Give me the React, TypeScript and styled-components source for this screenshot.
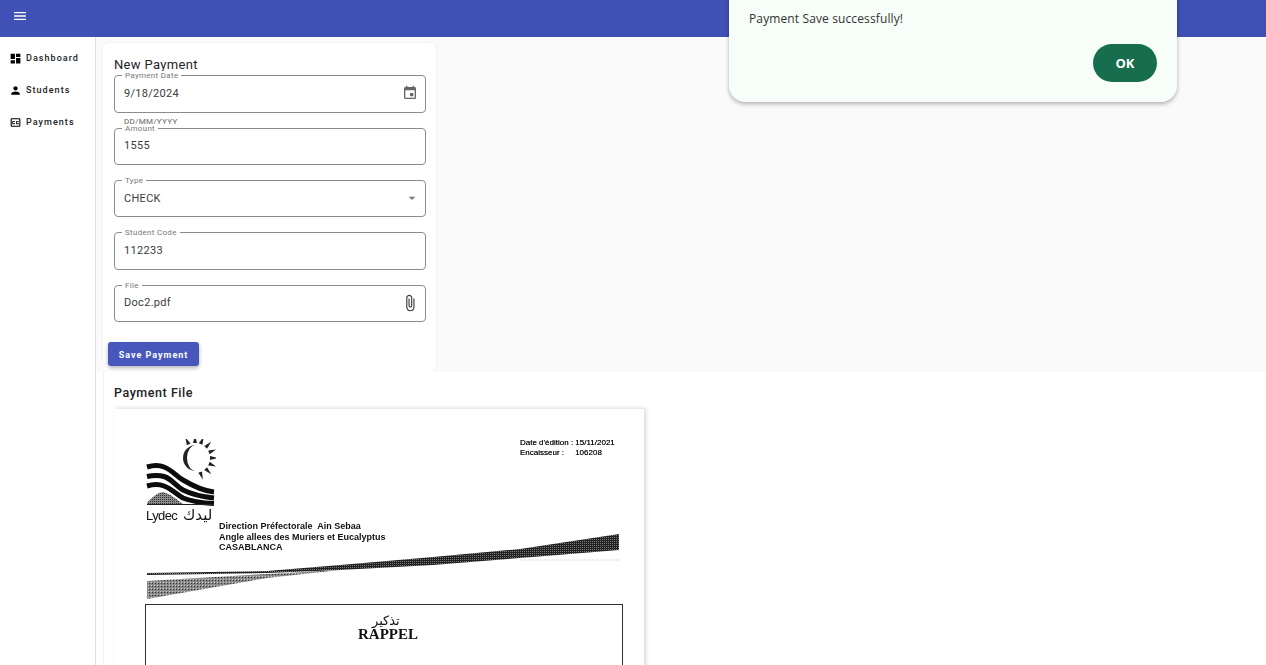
import React from "react";
import styled, { createGlobalStyle } from "styled-components";
import { MdMenu, MdDashboard, MdPerson, MdEvent, MdAttachFile, MdArrowDropDown, MdOutlineClosedCaption } from "react-icons/md";

const Global = createGlobalStyle`
  html, body { margin: 0; padding: 0; background: #fff; }
  body { font-family: Roboto, "Liberation Sans", sans-serif; color: rgba(0,0,0,.87); }
`;

const Page = styled.div`
  width: 1266px; height: 665px; overflow: hidden; position: relative;
  display: flex; flex-direction: column;
`;
const Header = styled.header`
  height: 37px; flex: none; background: #3f51b5; display: flex; align-items: center; padding-left: 12px; color: #fff;
  box-sizing: border-box; svg { display: block; margin-top: -6px; }
`;
const Body = styled.div`flex: 1; display: flex; min-height: 0;`;
const Sidebar = styled.nav`
  width: 95px; flex: none; border-right: 1px solid #e0e0e0; background: #fff; display: flex; flex-direction: column; padding-top: 5px;
`;
const NavItem = styled.div`
  height: 32px; display: flex; align-items: center; gap: 4px; padding-left: 9px;
  font-size: 9px; letter-spacing: 1.05px; font-weight: 500; color: #222;
  svg { display: block; flex: none; color: #000; }
`;
const Main = styled.main`flex: 1; display: flex; flex-direction: column; min-width: 0;`;
const Top = styled.section`height: 335px; flex: none; background: #fafafa; padding: 6px 0 0 7px; box-sizing: border-box;`;
const Card = styled.div`
  width: 333px; height: 329px; box-sizing: border-box; background: #fff; border-radius: 6px;
  box-shadow: 0 0 2px rgba(0,0,0,.08); padding: 14px 10px 0 11px; display: flex; flex-direction: column;
`;
const Title = styled.h2`
  margin: 0 0 2.2px; font-size: 13px; line-height: 16px; font-weight: 400; letter-spacing: .33px; color: #1f2328;
`;
const Fields = styled.div`display: flex; flex-direction: column; gap: 15px;`;
const Field = styled.div`
  position: relative; width: 312px; height: 37.4px; box-sizing: border-box; border: 1px solid #8c8c8c; border-radius: 4px;
  display: flex; align-items: center; justify-content: space-between; padding: 0 7px 1px 9px; font-size: 11px; letter-spacing: .3px; color: #3c3c3c;
  svg { display: block; color: #666; flex: none; }
`;
const FieldLabel = styled.label`
  position: absolute; left: 7px; top: -5px; background: #fff; padding: 0 3px; font-size: 8px; line-height: 9px; letter-spacing: .3px; color: #777;
`;
const Helper = styled.div`
  position: absolute; left: 9px; top: 41px; font-size: 8px; line-height: 10px; letter-spacing: .3px; color: #666;
`;
const SelectArrow = styled(MdArrowDropDown)`
  margin-right: -2px; && { color: #777; }
`;
const ClipIcon = styled(MdAttachFile)`
  margin-right: -1px; && { color: #3a3a3a; }
`;
const SaveButton = styled.button`
  align-self: flex-start; margin: 20px 0 0 -6px; width: 91px; height: 24px; border: 0; border-radius: 3px; background: #4757bb; color: #fff;
  font: 700 9px Roboto, sans-serif; letter-spacing: 1px; padding: 2px 0 0; box-shadow: 0 2px 4px rgba(0,0,0,.3);
`;
const Bottom = styled.section`flex: 1; background: #fff; padding: 0 0 0 7px; min-height: 0; display: flex;`;
const FileCard = styled.div`flex: 1; border-left: 1px solid #f0f0f0; padding: 13px 0 0 10px;`;
const FileTitle = styled.h3`margin: 0 0 9px; font-size: 12.5px; line-height: 15px; font-weight: 500; letter-spacing: .55px; color: #222;`;
const Paper = styled.div`
  position: relative; width: 530px; height: 300px; background: #fff; box-shadow: 2px -1px 4px rgba(0,0,0,.15); font-family: "Liberation Sans", sans-serif; color: #111;
`;
const Scan = styled.span<{ $x: number; $y: number }>`
  position: absolute; left: ${p => p.$x}px; top: ${p => p.$y}px; white-space: pre; font-size: 9px; line-height: 10px; font-weight: 700; filter: blur(.25px);
`;
const Light = styled(Scan)`font-weight: 400; font-size: 8px; color: #000; text-shadow: 0 0 .3px #555;`;
const Brand = styled(Scan)`font-size: 13px; line-height: 14px; font-weight: 400; letter-spacing: -.6px;`;
const BrandArabic = styled(Scan)`font-family: "DejaVu Sans", sans-serif; font-size: 15px; line-height: 16px; font-weight: 400;`;
const Rappel = styled(Scan)`font-family: "Liberation Serif", serif; font-size: 15px; line-height: 14px;`;
const Arabic = styled(Scan)`font-family: "DejaVu Sans", sans-serif; font-weight: 400; font-size: 13px; line-height: 14px;`;
const DocBox = styled.div`
  position: absolute; left: 31px; top: 195px; width: 476px; height: 120px; border: 1px solid #333;
`;
const LogoArt = styled.svg`position: absolute; left: 32px; top: 30px; filter: blur(.3px);`;
const BandArt = styled.svg`position: absolute; left: 32px; top: 120px; filter: blur(.3px);`;

const Overlay = styled.div`
  position: absolute; left: 729px; top: -10px; width: 448px; height: 112px; box-sizing: border-box; background: #f7fdf8; border-radius: 0 0 16px 16px;
  box-shadow: 0 2px 4px rgba(0,0,0,.3); padding: 20px; font-family: "Open Sans", sans-serif; font-size: 12px; line-height: 18px; color: #333;
  display: flex; flex-direction: column;
`;
const Message = styled.div`letter-spacing: .12px;`;
const Actions = styled.div`display: flex; justify-content: flex-end; margin-top: 16px;`;
const OkButton = styled.button`
  width: 64px; height: 38px; border-radius: 19px; border: 0; background: #176e4e; color: #fff; font: 700 13px "Open Sans", sans-serif; padding: 0;
`;

const rayAngles = [-25, 0, 22, 45, 68, 90, 112, 135, 160];

const Logo = () => (
  <LogoArt width="70" height="76" viewBox="0 0 70 76">
    <defs>
      <pattern id="grain" width="2" height="2" patternUnits="userSpaceOnUse">
        <rect width="2" height="2" fill="#8a8a8a" />
        <rect width="1" height="1" fill="#333" />
      </pattern>
    </defs>
    {rayAngles.map(a => (
      <path key={a} d="M-2 -15L2 -15L0 -23Z" fill="#222" transform={`translate(49 19) rotate(${a})`} />
    ))}
    <path d="M50 6a13 13 0 0 0 0 26a9 13 0 0 1 0-26z" fill="#222" />
    <g fill="none" stroke="#0c0c0c" strokeWidth="5">
      <path d="M1 28C8 26 13 26 18 28C26 31 30 37 37 41C47 47 58 52 68 53" />
      <path d="M1 37.5C8 36 13 36 18 37.5C26 40 30 47 37 51C47 56 58 58 68 59" />
      <path d="M1 47C8 45 13 45 18 47C26 50 30 55 37 59C47 63 58 64 68 64.5" />
    </g>
    <path d="M1 64C6 58 11 54 17 53C25 55 30 60 37 65L1 65z" fill="url(#grain)" />
    <rect x="1" y="65" width="67" height="1" fill="#222" />
  </LogoArt>
);

const Band = () => (
  <BandArt width="476" height="72" viewBox="0 0 476 72">
    <defs>
      <pattern id="dots" width="2" height="2" patternUnits="userSpaceOnUse">
        <rect width="2" height="2" fill="#222" />
        <rect width="1" height="1" fill="#777" />
      </pattern>
      <pattern id="noise" width="3" height="3" patternUnits="userSpaceOnUse">
        <rect width="3" height="3" fill="#888" />
        <rect width="1" height="1" fill="#333" />
        <rect x="2" y="2" width="1" height="1" fill="#ccc" />
      </pattern>
    </defs>
    <path d="M1 44L121 42L194 36L287 28L374 20L473 5V21L374 29L287 36L194 41L121 44L1 46Z" fill="url(#dots)" />
    <path d="M374 31H473" stroke="#ddd" strokeWidth="1" strokeDasharray="3 1" />
    <path d="M1 52L121 45L194 41L121 49L1 70Z" fill="url(#noise)" />
  </BandArt>
);

export default function App() {
  return (
    <Page>
      <Global />
      <Header><MdMenu size={16} /></Header>
      <Body>
        <Sidebar>
          <NavItem><MdDashboard size={13} />Dashboard</NavItem>
          <NavItem><MdPerson size={13} />Students</NavItem>
          <NavItem><MdOutlineClosedCaption size={13} />Payments</NavItem>
        </Sidebar>
        <Main>
          <Top>
            <Card>
              <Title>New Payment</Title>
              <Fields>
                <Field>
                  <FieldLabel>Payment Date</FieldLabel>9/18/2024<MdEvent size={16} />
                  <Helper>DD/MM/YYYY</Helper>
                </Field>
                <Field><FieldLabel>Amount</FieldLabel>1555</Field>
                <Field><FieldLabel>Type</FieldLabel>CHECK<SelectArrow size={16} /></Field>
                <Field><FieldLabel>Student Code</FieldLabel>112233</Field>
                <Field><FieldLabel>File</FieldLabel>Doc2.pdf<ClipIcon size={18} /></Field>
              </Fields>
              <SaveButton>Save Payment</SaveButton>
            </Card>
          </Top>
          <Bottom>
            <FileCard>
              <FileTitle>Payment File</FileTitle>
              <Paper>
                <Logo />
                <Brand $x={32} $y={100}>Lydec</Brand>
                <BrandArabic $x={69} $y={98}>ليدك</BrandArabic>
                <Scan $x={105} $y={112}>Direction Préfectorale  Ain Sebaa</Scan>
                <Scan $x={105} $y={123}>Angle allees des Muriers et Eucalyptus</Scan>
                <Scan $x={105} $y={133}>CASABLANCA</Scan>
                <Light $x={406} $y={29}>Date d'édition : 15/11/2021</Light>
                <Light $x={406} $y={39}>Encaisseur :     106208</Light>
                <Band />
                <DocBox />
                <Arabic $x={258} $y={205}>تذكير</Arabic>
                <Rappel $x={244} $y={218}>RAPPEL</Rappel>
              </Paper>
            </FileCard>
          </Bottom>
        </Main>
      </Body>
      <Overlay>
        <Message>Payment Save successfully!</Message>
        <Actions><OkButton>OK</OkButton></Actions>
      </Overlay>
    </Page>
  );
}
